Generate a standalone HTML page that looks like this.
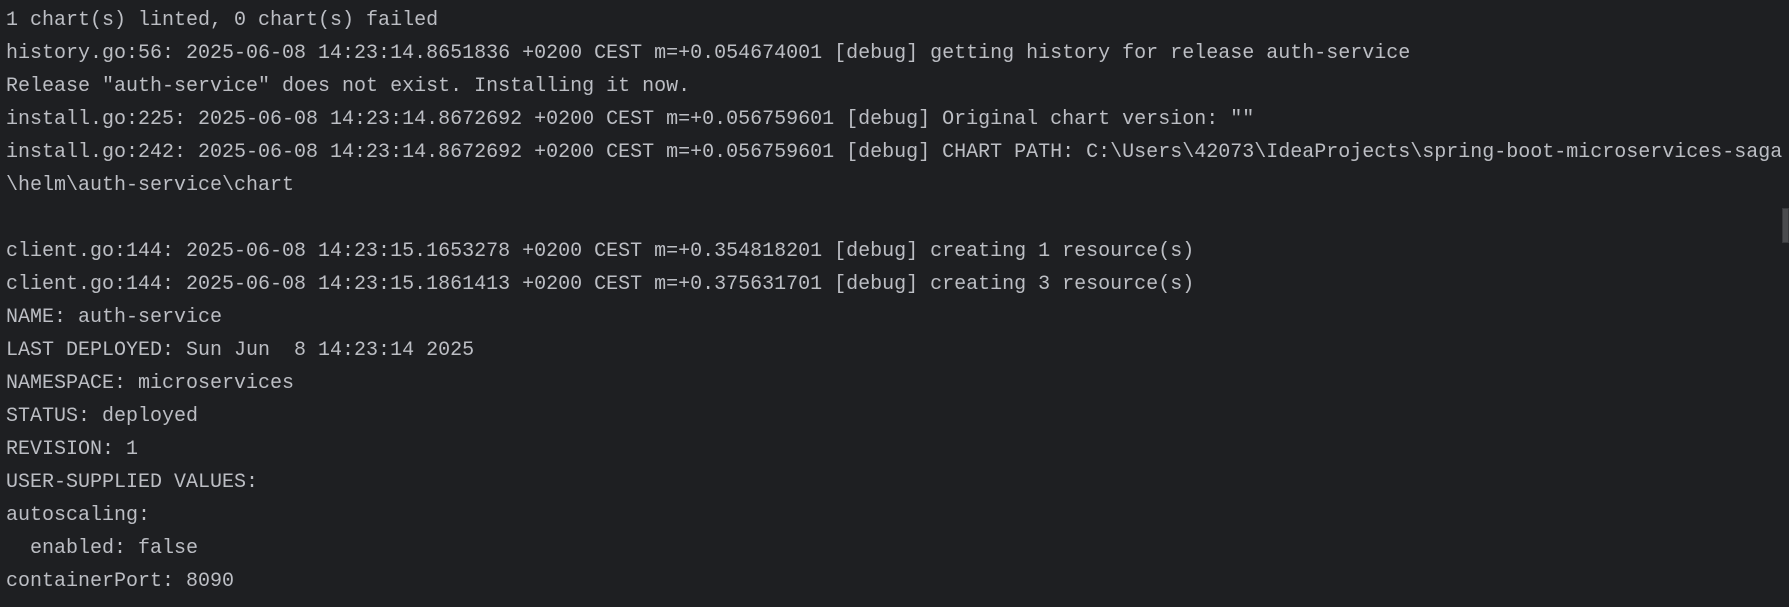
<!DOCTYPE html>
<html><head><meta charset="utf-8"><style>
html,body{margin:0;padding:0;background:#1e1f22;width:1789px;height:607px;overflow:hidden}
pre{margin:0;padding:4px 0 0 6px;font-family:"Liberation Mono",monospace;font-size:20px;line-height:33px;color:#bcbec4;white-space:pre}
.sb{position:absolute;left:1782px;top:208px;width:7px;height:35px;background:#4a4b4e;border:1px solid #38393c;box-sizing:border-box}
</style></head><body>
<pre>1 chart(s) linted, 0 chart(s) failed
history.go:56: 2025-06-08 14:23:14.8651836 +0200 CEST m=+0.054674001 [debug] getting history for release auth-service
Release "auth-service" does not exist. Installing it now.
install.go:225: 2025-06-08 14:23:14.8672692 +0200 CEST m=+0.056759601 [debug] Original chart version: ""
install.go:242: 2025-06-08 14:23:14.8672692 +0200 CEST m=+0.056759601 [debug] CHART PATH: C:\Users\42073\IdeaProjects\spring-boot-microservices-saga
\helm\auth-service\chart

client.go:144: 2025-06-08 14:23:15.1653278 +0200 CEST m=+0.354818201 [debug] creating 1 resource(s)
client.go:144: 2025-06-08 14:23:15.1861413 +0200 CEST m=+0.375631701 [debug] creating 3 resource(s)
NAME: auth-service
LAST DEPLOYED: Sun Jun  8 14:23:14 2025
NAMESPACE: microservices
STATUS: deployed
REVISION: 1
USER-SUPPLIED VALUES:
autoscaling:
  enabled: false
containerPort: 8090</pre>
<div class="sb"></div>
</body></html>
